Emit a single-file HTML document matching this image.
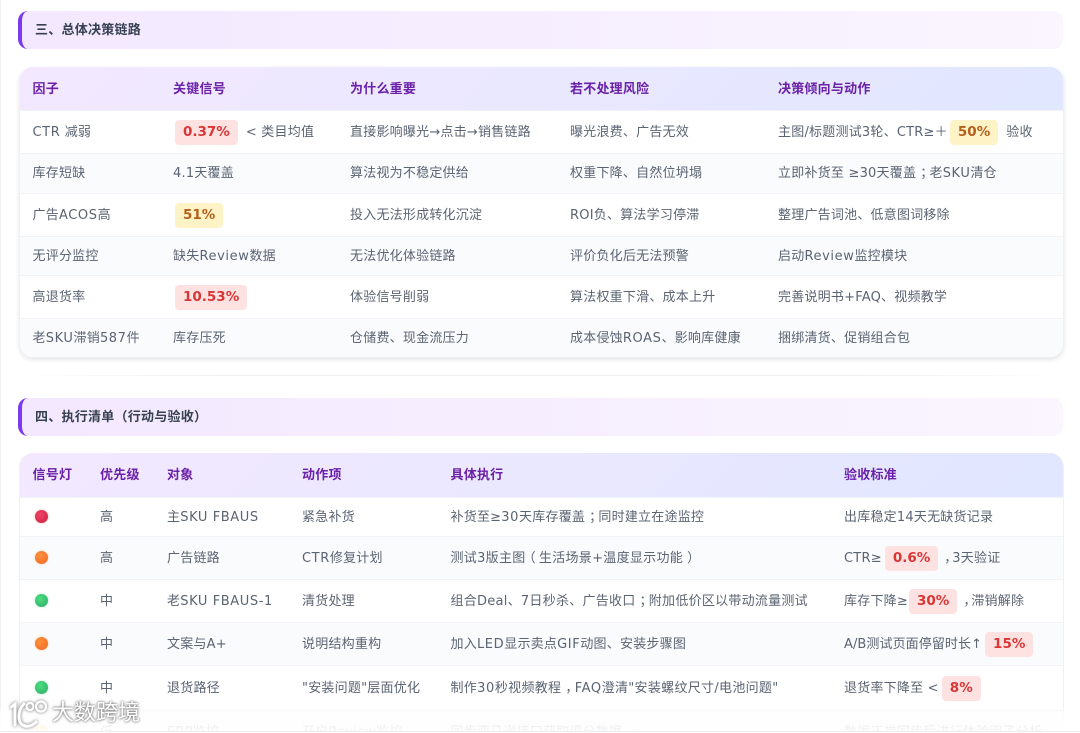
<!DOCTYPE html>
<html lang="zh">
<head>
<meta charset="utf-8">
<style>
html,body{margin:0;padding:0;background:#fff;overflow:hidden;width:1080px;height:733px;}
body{position:relative;font-family:"DejaVu Sans","WenQuanYi Zen Hei","Noto Sans CJK SC",sans-serif;font-size:13px;color:#5b6472;letter-spacing:.22px;}
#w{position:absolute;left:0;top:0;width:1080px;height:733px;overflow:hidden;filter:blur(.35px);}
.sec{position:absolute;left:18px;width:1041px;height:38px;border-left:4px solid #7c3aed;border-radius:10px;background:linear-gradient(90deg,#f3e8ff,#faf5ff);font-weight:bold;color:#374151;line-height:40px;text-indent:13px;letter-spacing:.25px;}
.card{position:absolute;left:19px;width:1043px;border:1px solid #eef0f5;border-top:0;border-radius:14px;overflow:hidden;background:#fff;}
.c1{box-shadow:0 2px 5px rgba(0,0,0,.1);}
.hd{position:absolute;left:0;top:0;width:100%;height:43px;background:linear-gradient(135deg,#f3e8ff,#e0e7ff);}
.hd span{position:absolute;top:0;line-height:45px;font-weight:bold;color:#6b21a8;white-space:nowrap;}
.r{position:absolute;left:0;width:100%;border-top:1px solid #f1f3f7;box-sizing:border-box;}
.r.a{background:#fafbfd;}
.r>span{position:absolute;top:0;white-space:pre;}
.r>span.dw{top:-1px;height:100%;display:flex;align-items:center;}
.p{display:inline-block;vertical-align:middle;font-size:13.5px;font-weight:bold;line-height:17px;padding:4px 8px;border-radius:4px;background:#fee2e2;color:#d93636;margin:0 8px 0 2px;letter-spacing:0;}
.y{background:#fef3c7;color:#b4601a;}
.l{letter-spacing:.6px;}
.k{display:inline-block;width:8px;}
.s{position:relative;left:4px;}
.o{position:relative;left:-3px;}
.c{position:relative;left:4px;}
.d{display:block;width:13px;height:13px;border-radius:50%;}
.red{background:radial-gradient(circle at 40% 35%,#ef4565,#c81e3c);box-shadow:0 0 2px rgba(220,38,38,.4);}
.org{background:radial-gradient(circle at 40% 35%,#fb923c,#f26522);box-shadow:0 0 2px rgba(249,115,22,.4);}
.grn{background:radial-gradient(circle at 40% 35%,#4ade80,#2fa866);box-shadow:0 0 2px rgba(34,197,94,.4);}
.yel{background:radial-gradient(circle at 40% 35%,#fde68a,#f59e0b);}
#div{position:absolute;left:19px;top:375px;width:1043px;height:1px;background:linear-gradient(90deg,transparent,#eceef2 20%,#eceef2 80%,transparent);}
#fade{position:absolute;left:0;top:706px;width:1080px;height:25px;background:linear-gradient(180deg,rgba(255,255,255,0),rgba(255,255,255,.8) 30%,rgba(255,255,255,.92));}
#bot{position:absolute;left:0;top:731px;width:1080px;height:2px;background:linear-gradient(#eceef1 50%,#fff 50%);}
#lft{position:absolute;left:0;top:0;width:1px;height:731px;background:#f0f1f4;}
#mark{position:absolute;left:52px;top:699px;font-size:22px;line-height:30px;color:#fff;letter-spacing:0;text-shadow:0 0 2px rgba(80,80,80,.85),0 0 3px rgba(80,80,80,.55);white-space:nowrap;}
#logo{position:absolute;left:9px;top:697px;filter:drop-shadow(0 0 1.5px rgba(80,80,80,.85));}
</style>
</head>
<body>
<div id="w">
<div id="lft"></div>
<div class="sec" style="top:11px">三、总体决策链路</div>

<div class="card c1" style="top:67px;height:290px">
 <div class="hd">
  <span style="left:12.5px">因子</span><span style="left:153px">关键信号</span><span style="left:330px">为什么重要</span><span style="left:550px">若不处理风险</span><span style="left:758px">决策倾向与动作</span>
 </div>
 <div class="r" style="top:43px;height:43px;line-height:43px"><span style="left:12.5px"><span class="l">CTR</span> 减弱</span><span style="left:153px"><b class="p">0.37%</b>&lt; 类目均值</span><span style="left:330px">直接影响曝光→点击→销售链路</span><span style="left:550px">曝光浪费、广告无效</span><span style="left:758px">主图/标题测试3轮、CTR≥＋<b class="p y">50%</b>验收</span></div>
 <div class="r a" style="top:86px;height:40px;line-height:40px"><span style="left:12.5px">库存短缺</span><span style="left:153px">4.1天覆盖</span><span style="left:330px">算法视为不稳定供给</span><span style="left:550px">权重下降、自然位坍塌</span><span style="left:758px">立即补货至 ≥30天覆盖<span class="s">；</span>老<span class="l">SKU</span>清仓</span></div>
 <div class="r" style="top:126px;height:43px;line-height:43px"><span style="left:12.5px">广告<span class="l">ACOS</span>高</span><span style="left:153px"><b class="p y">51%</b></span><span style="left:330px">投入无法形成转化沉淀</span><span style="left:550px">ROI负、算法学习停滞</span><span style="left:758px">整理广告词池、低意图词移除</span></div>
 <div class="r a" style="top:169px;height:39px;line-height:39px"><span style="left:12.5px">无评分监控</span><span style="left:153px">缺失<span class="l">Review</span>数据</span><span style="left:330px">无法优化体验链路</span><span style="left:550px">评价负化后无法预警</span><span style="left:758px">启动<span class="l">Review</span>监控模块</span></div>
 <div class="r" style="top:208px;height:43px;line-height:43px"><span style="left:12.5px">高退货率</span><span style="left:153px"><b class="p">10.53%</b></span><span style="left:330px">体验信号削弱</span><span style="left:550px">算法权重下滑、成本上升</span><span style="left:758px">完善说明书+FAQ、视频教学</span></div>
 <div class="r a" style="top:251px;height:39px;line-height:39px"><span style="left:12.5px">老<span class="l">SKU</span>滞销<span class="l">587</span>件</span><span style="left:153px">库存压死</span><span style="left:330px">仓储费、现金流压力</span><span style="left:550px">成本侵蚀<span class="l">ROAS</span>、影响库健康</span><span style="left:758px">捆绑清货、促销组合包</span></div>
</div>

<div id="div"></div>

<div class="sec" style="top:398px">四、执行清单（行动与验收）</div>

<div class="card" style="top:453px;height:300px">
 <div class="hd" style="height:44px">
  <span style="left:12.5px;line-height:46px">信号灯</span><span style="left:80px;line-height:46px">优先级</span><span style="left:147px;line-height:46px">对象</span><span style="left:282px;line-height:46px">动作项</span><span style="left:430.5px;line-height:46px">具体执行</span><span style="left:824px;line-height:46px">验收标准</span>
 </div>
 <div class="r" style="top:44px;height:39px;line-height:39px"><span class="dw" style="left:15px"><i class="d red"></i></span><span style="left:80px">高</span><span style="left:147px">主<span class="l">SKU FBAUS</span></span><span style="left:282px">紧急补货</span><span style="left:430.5px">补货至≥<span class="l">30</span>天库存覆盖<span class="s">；</span>同时建立在途监控</span><span style="left:824px">出库稳定14天无缺货记录</span></div>
 <div class="r a" style="top:83px;height:43px;line-height:43px"><span class="dw" style="left:15px"><i class="d org"></i></span><span style="left:80px">高</span><span style="left:147px">广告链路</span><span style="left:282px"><span class="l">CTR</span>修复计划</span><span style="left:430.5px;letter-spacing:.3px">测试3版主图<span class="o">（</span>生活场景+温度显示功能<span class="c">）</span></span><span style="left:824px">CTR≥<b class="p" style="margin-left:3px;margin-right:6px">0.6%</b><span class="k">，</span>3天验证</span></div>
 <div class="r" style="top:126px;height:43px;line-height:43px"><span class="dw" style="left:15px"><i class="d grn"></i></span><span style="left:80px">中</span><span style="left:147px">老<span class="l">SKU FBAUS-1</span></span><span style="left:282px">清货处理</span><span style="left:430.5px;letter-spacing:.26px">组合Deal、7日秒杀、广告收口<span class="s">；</span>附加低价区以带动流量测试</span><span style="left:824px">库存下降≥<b class="p" style="margin-left:1px;margin-right:6px">30%</b><span class="k">，</span>滞销解除</span></div>
 <div class="r a" style="top:169px;height:43px;line-height:43px"><span class="dw" style="left:15px"><i class="d org"></i></span><span style="left:80px">中</span><span style="left:147px">文案与A+</span><span style="left:282px">说明结构重构</span><span style="left:430.5px">加入<span class="l">LED</span>显示卖点<span class="l">GIF</span>动图、安装步骤图</span><span style="left:824px;letter-spacing:.08px">A/B测试页面停留时长↑<b class="p" style="margin-left:3px">15%</b></span></div>
 <div class="r" style="top:212px;height:45px;line-height:45px"><span class="dw" style="left:15px"><i class="d grn"></i></span><span style="left:80px">中</span><span style="left:147px">退货路径</span><span style="left:282px">"安装问题"层面优化</span><span style="left:430.5px;letter-spacing:.3px">制作<span class="l">30</span>秒视频教程<span class="s">，</span><span class="l">FAQ</span>澄清"安装螺纹尺寸/电池问题"</span><span style="left:824px">退货率下降至 &lt;<b class="p" style="margin-left:3px">8%</b></span></div>
 <div class="r a" style="top:257px;height:43px;line-height:43px"><span class="dw" style="left:15px"><i class="d yel"></i></span><span style="left:80px">低</span><span style="left:147px">ERP监控</span><span style="left:282px">开启Review监控</span><span style="left:430.5px">同步亚马逊接口获取评分数据</span><span style="left:824px">数据正常回传后进行体验因子分析</span></div>
</div>

<div id="fade"></div>
<div id="bot"></div>
<svg id="logo" width="42" height="34" viewBox="0 0 42 34" fill="none" stroke="#fff" stroke-width="3" stroke-linecap="round">
 <path d="M2.5 10 L6 7 V28"/>
 <path d="M15 7 C8 14 8 27 16 29 C20 30 24 28 27 25"/>
 <circle cx="21" cy="9.5" r="3.5" stroke-width="2.2"/>
 <circle cx="32" cy="9.5" r="5" stroke-width="2.2"/>
</svg>
<div id="mark">大数跨境</div>
</div>
</body>
</html>
